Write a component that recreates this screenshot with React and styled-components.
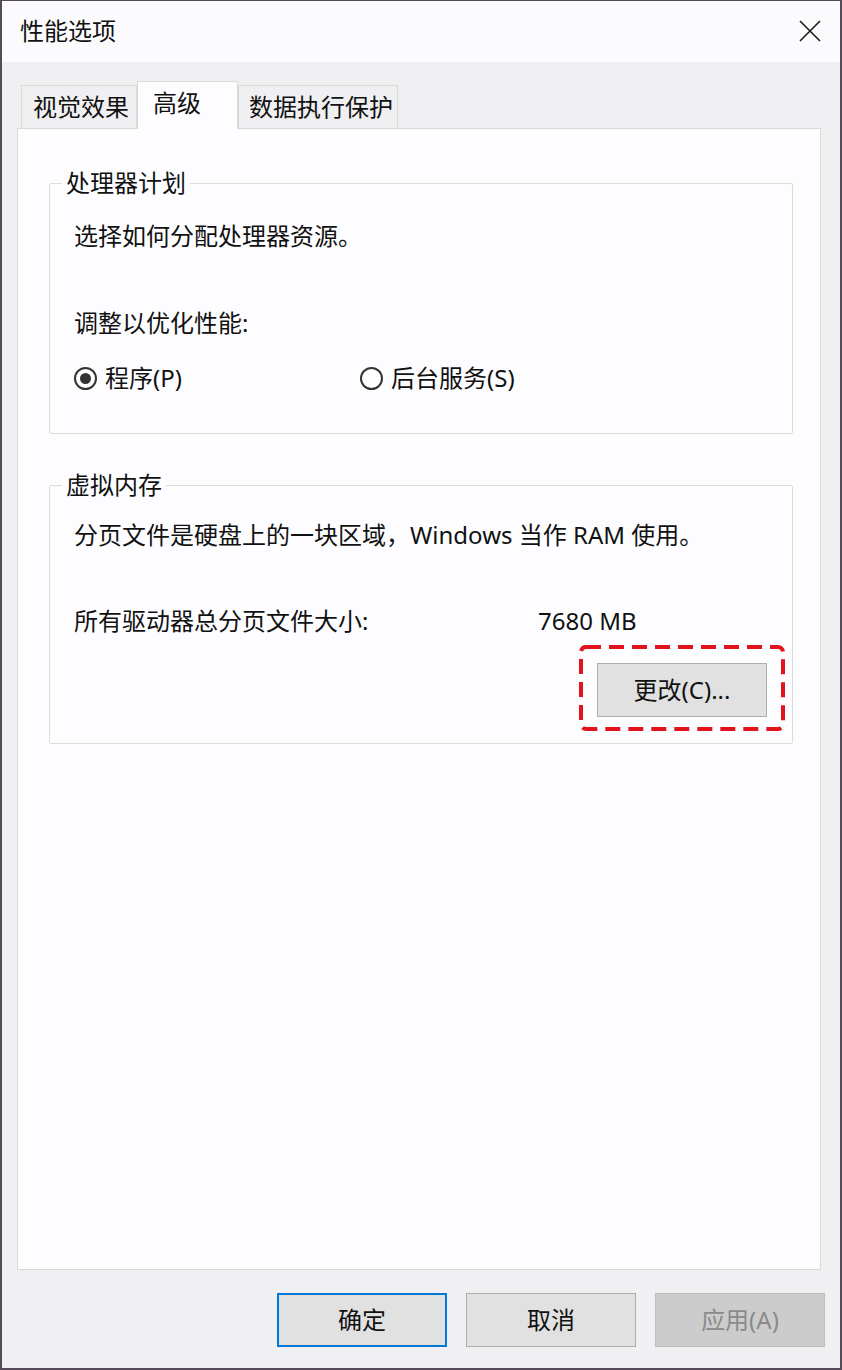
import React from "react";
import styled, { createGlobalStyle } from "styled-components";

const FONT = `"Noto Sans", "Noto Sans CJK SC", sans-serif`;

const Global = createGlobalStyle`
  html, body { margin: 0; padding: 0; background: #ffffff; }
  body { font-family: ${FONT}; }
`;

const Window = styled.div`
  width: 842px;
  height: 1370px;
  box-sizing: border-box;
  border: 2px solid #554a58;
  border-top-width: 1px;
  background: #f0f0f2;
  display: flex;
  flex-direction: column;
  font-family: ${FONT};
  font-size: 24px;
  color: #111;
`;

const TitleBar = styled.div`
  height: 61px;
  flex: none;
  box-sizing: border-box;
  background: #fbfbfd;
  display: flex;
  align-items: center;
  justify-content: space-between;
  padding: 0 19px 2px 18px;
`;

const Title = styled.div`
  line-height: 28px;
  font-size: 24px;
`;

const CloseButton = styled.div`
  width: 22px;
  height: 22px;
  display: flex;
`;

const Body = styled.div`
  flex: 1;
  display: flex;
  flex-direction: column;
  padding: 19px 19px 0 15px;
  min-height: 0;
`;

const TabStrip = styled.div`
  height: 47px;
  flex: none;
  display: flex;
  align-items: flex-end;
  padding-left: 4px;
  position: relative;
  z-index: 1;
`;

const Tab = styled.div`
  box-sizing: border-box;
  width: ${(p) => p.$width}px;
  height: ${(p) => (p.$active ? 48 : 43)}px;
  margin-bottom: ${(p) => (p.$active ? -1 : 0)}px;
  padding-left: ${(p) => p.$pl}px;
  padding-bottom: ${(p) => (p.$active ? 6 : 0)}px;
  background: ${(p) => (p.$active ? "#fdfdff" : "#f0f0f2")};
  border: 1px solid #d9d9d9;
  border-bottom: none;
  display: flex;
  align-items: center;
  line-height: 28px;
  white-space: nowrap;
`;

const Panel = styled.div`
  flex: 1;
  box-sizing: border-box;
  background: #fdfdff;
  border: 1px solid #d9d9d9;
  padding: 40px 27px 0 31px;
`;

const Group = styled.fieldset`
  margin: ${(p) => p.$mt || 0}px 0 0 0;
  min-width: 0;
  border: 1px solid #dcdcdc;
  border-radius: 2px;
  padding: 0 7px ${(p) => p.$pb}px 0;
`;

const Legend = styled.legend`
  margin-left: 12px;
  padding: 0 4px;
  line-height: 28px;
  font-size: 24px;
`;

const GroupBody = styled.div`
  padding-left: 24px;
`;

const Line = styled.div`
  margin-top: ${(p) => p.$mt}px;
  height: 28px;
  line-height: 28px;
  white-space: nowrap;
`;

const RadioRow = styled.div`
  margin-top: ${(p) => p.$mt}px;
  height: 28px;
  display: grid;
  grid-template-columns: 286px auto;
  align-items: center;
`;

const RadioItem = styled.label`
  display: flex;
  align-items: center;
  gap: 8px;
  line-height: 28px;
`;

const RadioCircle = styled.span`
  width: 23px;
  height: 23px;
  box-sizing: border-box;
  border: 2px solid #333;
  border-radius: 50%;
  display: flex;
  align-items: center;
  justify-content: center;
  background: #fff;

  &::after {
    content: "";
    width: 11px;
    height: 11px;
    border-radius: 50%;
    background: ${(p) => (p.$checked ? "#333" : "transparent")};
  }
`;

const InfoRow = styled.div`
  margin-top: ${(p) => p.$mt}px;
  height: 28px;
  line-height: 28px;
  display: grid;
  grid-template-columns: 464px auto;
  white-space: nowrap;
`;

const HighlightRow = styled.div`
  margin-top: ${(p) => p.$mt}px;
  display: flex;
  justify-content: flex-end;
`;

const Highlight = styled.div`
  position: relative;
  padding: 18px 18px 14px 18px;
`;

const DashFrame = styled.svg`
  position: absolute;
  inset: 0;
  pointer-events: none;
`;

const Button = styled.button`
  width: 170px;
  height: 54px;
  box-sizing: border-box;
  margin: 0;
  padding: 0;
  font-family: ${FONT};
  font-size: 24px;
  line-height: 28px;
  color: ${(p) => (p.$disabled ? "#8a8a8a" : "#111")};
  background: ${(p) => (p.$disabled ? "#cccccc" : "#e1e1e1")};
  border: ${(p) =>
    p.$primary
      ? "2px solid #0078d7"
      : p.$disabled
      ? "1px solid #bfbfbf"
      : "1px solid #adadad"};
  display: flex;
  align-items: center;
  justify-content: center;
`;

const Footer = styled.div`
  height: 98px;
  flex: none;
  box-sizing: border-box;
  padding: 23px 15px 0 0;
  display: flex;
  justify-content: flex-end;
  align-items: flex-start;
  gap: 19px;
`;

export default function App() {
  return (
    <>
      <Global />
      <Window>
        <TitleBar>
          <Title>性能选项</Title>
          <CloseButton>
            <svg width="22" height="22" viewBox="0 0 22 22">
              <path d="M1 1 L21 21 M21 1 L1 21" stroke="#1a1a1a" strokeWidth="1.6" fill="none" />
            </svg>
          </CloseButton>
        </TitleBar>
        <Body>
          <TabStrip>
            <Tab $width={116} $pl={11}>视觉效果</Tab>
            <Tab $width={101} $pl={15} $active>高级</Tab>
            <Tab $width={160} $pl={10}>数据执行保护</Tab>
          </TabStrip>
          <Panel>
            <Group $pb={41}>
              <Legend>处理器计划</Legend>
              <GroupBody>
                <Line $mt={25}>选择如何分配处理器资源。</Line>
                <Line $mt={59}>调整以优化性能:</Line>
                <RadioRow $mt={27}>
                  <RadioItem>
                    <RadioCircle $checked />
                    程序(P)
                  </RadioItem>
                  <RadioItem>
                    <RadioCircle />
                    后台服务(S)
                  </RadioItem>
                </RadioRow>
              </GroupBody>
            </Group>
            <Group $mt={37} $pb={12}>
              <Legend>虚拟内存</Legend>
              <GroupBody>
                <Line $mt={22}>分页文件是硬盘上的一块区域，Windows 当作 RAM 使用。</Line>
                <InfoRow $mt={58}>
                  <span>所有驱动器总分页文件大小:</span>
                  <span>7680 MB</span>
                </InfoRow>
                <HighlightRow $mt={10}>
                  <Highlight>
                    <DashFrame width="206" height="86" viewBox="0 0 206 86">
                      <rect
                        x="2"
                        y="2"
                        width="202"
                        height="82"
                        rx="5"
                        fill="none"
                        stroke="#e3131b"
                        strokeWidth="4"
                        strokeDasharray="15 8"
                      />
                    </DashFrame>
                    <Button>更改(C)...</Button>
                  </Highlight>
                </HighlightRow>
              </GroupBody>
            </Group>
          </Panel>
        </Body>
        <Footer>
          <Button $primary>确定</Button>
          <Button>取消</Button>
          <Button $disabled>应用(A)</Button>
        </Footer>
      </Window>
    </>
  );
}
